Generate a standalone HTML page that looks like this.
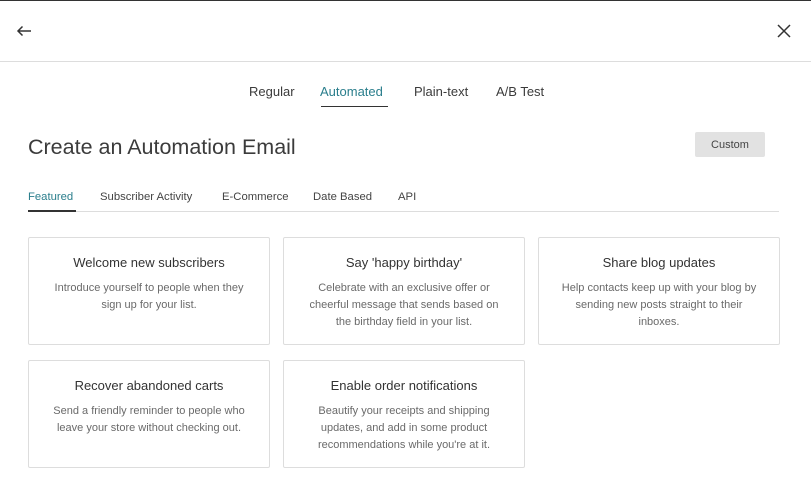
<!DOCTYPE html>
<html><head><style>
*{margin:0;padding:0;box-sizing:border-box}
body{width:811px;height:488px;background:#fff;font-family:"Liberation Sans",sans-serif;color:#3b3b3b;position:relative;overflow:hidden}
.a{position:absolute}
.tab{position:absolute;top:84px;font-size:13px;color:#3b3b3b}
.st{position:absolute;top:191px;font-size:11.3px;color:#444}
.card{position:absolute;width:242px;height:108px;border:1px solid #ddd;border-radius:2px;text-align:center}
.card h3{font-size:13px;font-weight:normal;color:#333;margin-top:17px;line-height:16px}
.card p{font-size:11px;color:#6a6a6a;line-height:17px;margin:9px 20px 0}
</style></head><body>
<div class="a" style="left:0;top:0;width:811px;height:1px;background:#333"></div>
<svg class="a" style="left:16px;top:25px" width="16" height="12" viewBox="0 0 16 12"><path d="M15 6H2M6.5 1.5L2 6l4.5 4.5" stroke="#333" stroke-width="1.5" fill="none"/></svg>
<svg class="a" style="left:777px;top:24px" width="14" height="14" viewBox="0 0 14 14"><path d="M1 1L13 13M13 1L1 13" stroke="#333" stroke-width="1.5"/></svg>
<div class="a" style="left:0;top:61px;width:811px;height:1px;background:#ddd"></div>
<div class="tab" style="left:249px">Regular</div>
<div class="tab" style="left:320px;color:#2a7e8c">Automated</div>
<div class="a" style="left:321px;top:106px;width:67px;height:1px;background:#333"></div>
<div class="tab" style="left:414px">Plain-text</div>
<div class="tab" style="left:496px">A/B Test</div>
<div class="a" style="left:28px;top:135px;font-size:21.5px;color:#3b3b3b">Create an Automation Email</div>
<div class="a" style="left:695px;top:132px;width:70px;height:25px;background:#e2e2e2;border-radius:2px;font-size:11px;line-height:26px;text-align:center;color:#444">Custom</div>
<div class="st" style="left:28px;color:#2a7e8c">Featured</div>
<div class="st" style="left:100px">Subscriber Activity</div>
<div class="st" style="left:222px">E-Commerce</div>
<div class="st" style="left:313px">Date Based</div>
<div class="st" style="left:398px">API</div>
<div class="a" style="left:28px;top:211px;width:751px;height:1px;background:#ddd"></div>
<div class="a" style="left:28px;top:210px;width:48px;height:2px;background:#333"></div>
<div class="card" style="left:28px;top:237px"><h3>Welcome new subscribers</h3><p>Introduce yourself to people when they<br>sign up for your list.</p></div>
<div class="card" style="left:283px;top:237px"><h3>Say 'happy birthday'</h3><p>Celebrate with an exclusive offer or<br>cheerful message that sends based on<br>the birthday field in your list.</p></div>
<div class="card" style="left:538px;top:237px"><h3>Share blog updates</h3><p>Help contacts keep up with your blog by<br>sending new posts straight to their<br>inboxes.</p></div>
<div class="card" style="left:28px;top:360px"><h3>Recover abandoned carts</h3><p>Send a friendly reminder to people who<br>leave your store without checking out.</p></div>
<div class="card" style="left:283px;top:360px"><h3>Enable order notifications</h3><p>Beautify your receipts and shipping<br>updates, and add in some product<br>recommendations while you're at it.</p></div>
</body></html>
